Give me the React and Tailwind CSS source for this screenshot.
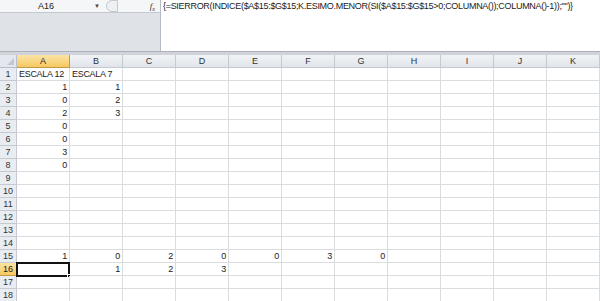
import React from "react";

const COLS = ["A", "B", "C", "D", "E", "F", "G", "H", "I", "J", "K"];

const DATA = {
  1: { A: "ESCALA 12", B: "ESCALA 7" },
  2: { A: 1, B: 1 },
  3: { A: 0, B: 2 },
  4: { A: 2, B: 3 },
  5: { A: 0 },
  6: { A: 0 },
  7: { A: 3 },
  8: { A: 0 },
  15: { A: 1, B: 0, C: 2, D: 0, E: 0, F: 3, G: 0 },
  16: { B: 1, C: 2, D: 3 },
};

const FORMULA = '{=SIERROR(INDICE($A$15:$G$15;K.ESIMO.MENOR(SI($A$15:$G$15>0;COLUMNA());COLUMNA()-1));"")}';

const Cell = ({ value, active }) => {
  const isText = typeof value === "string";
  return (
    <div
      className={`relative h-[13px] border-r border-b border-[#dadcdd] px-[2px] text-[9px] leading-[12px] tracking-[-0.3px] text-[#222] whitespace-nowrap ${
        isText ? "text-left" : "text-right"
      }`}
    >
      {value}
      {active && (
        <div className="absolute -left-[1px] -top-[1px] w-[54px] h-[15px] border-2 border-[#111]">
          <div className="absolute -right-[3px] -bottom-[3px] w-[4px] h-[4px] bg-[#111] border border-white" />
        </div>
      )}
    </div>
  );
};

export default function App() {
  const rows = Array.from({ length: 18 }, (_, i) => i + 1);

  return (
    <div
      className="w-[600px] h-[301px] overflow-hidden bg-white"
      style={{ fontFamily: '"Liberation Sans", Arial, sans-serif' }}
    >
      {/* formula bar */}
      <div className="flex h-[51px]">
        <div className="w-[161px] flex flex-col bg-[#dfe3e8] border-r border-[#b6bcc6]">
          <div className="flex items-center h-[13px] bg-[#f5f6f7] border-b border-[#c4c9d0]">
            <div className="w-[92px] text-center text-[9px] text-[#222] leading-[12px]">A16</div>
            <span className="text-[6px] text-[#444] ml-[2px]">▼</span>
            <div className="ml-[6px] w-[12px] h-[12px] rounded-l-full border border-[#c4c9d0] bg-[#eef0f3]" />
            <div className="flex-1" />
            <span className="mr-[5px] text-[9px] italic text-[#333] leading-[12px]" style={{ fontFamily: '"Liberation Serif", serif' }}>
              f<sub className="text-[6px]">x</sub>
            </span>
          </div>
        </div>
        <div className="flex-1 px-[2px] text-[9px] leading-[13px] tracking-[-0.3px] text-[#222] whitespace-nowrap overflow-hidden">
          {FORMULA}
        </div>
      </div>
      <div className="h-[4px] bg-[#d0d4da] border-t border-[#aab1bb]" />

      {/* grid */}
      <div className="grid grid-cols-[17px_repeat(11,53px)]">
        <div className="relative h-[13px] bg-[#e4e8ee] border-r border-b border-[#b8bec7]">
          <div className="absolute right-[2px] bottom-[2px] w-0 h-0 border-l-[7px] border-l-transparent border-b-[7px] border-b-[#c3c8cf]" />
        </div>
        {COLS.map((c) => (
          <div
            key={c}
            className={`h-[13px] text-center text-[9px] leading-[12px] border-r border-b ${
              c === "A"
                ? "bg-gradient-to-b from-[#fbe3a6] to-[#f6c95e] border-[#c29b4a] text-[#222]"
                : "bg-gradient-to-b from-[#f1f3f6] to-[#e1e5eb] border-[#c5cad1] text-[#333]"
            }`}
          >
            {c}
          </div>
        ))}
        {rows.map((r) => (
          <React.Fragment key={r}>
            <div
              className={`h-[13px] text-center text-[9px] leading-[12px] border-r border-b ${
                r === 16
                  ? "bg-gradient-to-b from-[#fbe3a6] to-[#f6c95e] border-[#c29b4a] text-[#222]"
                  : "bg-[#e9edf2] border-[#c5cad1] text-[#333]"
              }`}
            >
              {r}
            </div>
            {COLS.map((c) => (
              <Cell key={c} value={DATA[r]?.[c]} active={r === 16 && c === "A"} />
            ))}
          </React.Fragment>
        ))}
      </div>
    </div>
  );
}
